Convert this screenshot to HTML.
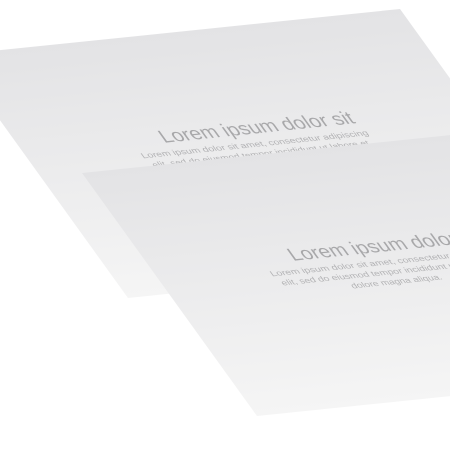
<!DOCTYPE html>
<html><head><meta charset="utf-8"><style>
html,body{margin:0;padding:0;background:#fff;width:450px;height:450px;overflow:hidden}
svg{display:block}
text{font-family:"Liberation Sans",sans-serif}
</style></head><body>
<svg width="450" height="450" viewBox="0 0 450 450" xmlns="http://www.w3.org/2000/svg">
<defs>
<linearGradient id="g" x1="0" y1="0" x2="0" y2="1">
<stop offset="0" stop-color="#e3e3e5"/>
<stop offset="1" stop-color="#f5f5f5"/>
</linearGradient>
<g id="sheet">
<rect x="0" y="0" width="447" height="243" fill="url(#g)"/>
<text x="234" y="102" font-size="17" fill="#a8a8aa" text-anchor="middle" textLength="192" lengthAdjust="spacingAndGlyphs">Lorem ipsum dolor sit</text>
<text x="221" y="114.5" font-size="7.2" fill="#b2b2b4" text-anchor="middle" textLength="226" lengthAdjust="spacingAndGlyphs">Lorem ipsum dolor sit amet, consectetur adipiscing</text>
<text x="220" y="124" font-size="7.2" fill="#b2b2b4" text-anchor="middle" textLength="216" lengthAdjust="spacingAndGlyphs">elit, sed do eiusmod tempor incididunt ut labore et</text>
<text x="220" y="133.5" font-size="7.2" fill="#b2b2b4" text-anchor="middle" textLength="90" lengthAdjust="spacingAndGlyphs">dolore magna aliqua.</text>
</g>
</defs>
<use href="#sheet" transform="matrix(1,-0.103,0.72,1,-47,55)"/>
<use href="#sheet" transform="matrix(1,-0.103,0.72,1,82,173)"/>
</svg>
</body></html>
